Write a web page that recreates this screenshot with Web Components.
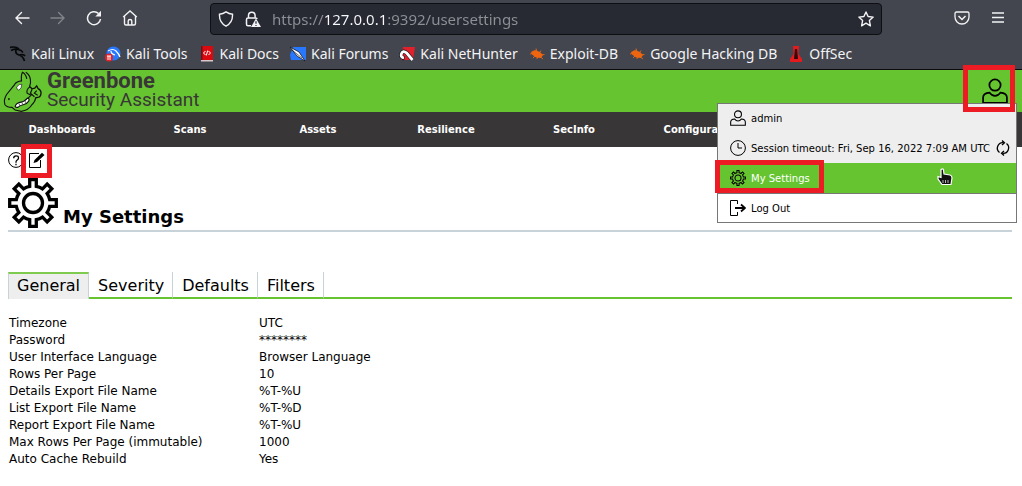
<!DOCTYPE html>
<html lang="en">
<head>
<meta charset="utf-8">
<meta name="viewport" content="width=device-width, initial-scale=1">
<title>Greenbone Security Assistant</title>
<style>
  body {
    margin: 0;
    background: #fff;
    color: #000;
    font-family: "DejaVu Sans", sans-serif;
    font-size: 12px;
    --green: #66c430;
    --dark: #393637;
    --marker: #ed1c24;
  }
</style>
</head>
<body>
  <browser-bar url="https://127.0.0.1:9392/usersettings">
    <book-mark icon="kali">Kali Linux</book-mark>
    <book-mark icon="tools">Kali Tools</book-mark>
    <book-mark icon="docs">Kali Docs</book-mark>
    <book-mark icon="forums">Kali Forums</book-mark>
    <book-mark icon="nethunter">Kali NetHunter</book-mark>
    <book-mark icon="bug">Exploit-DB</book-mark>
    <book-mark icon="bug">Google Hacking DB</book-mark>
    <book-mark icon="offsec">OffSec</book-mark>
  </browser-bar>

  <gsa-header>
    <user-menu>
      <menu-entry icon="user">admin</menu-entry>
      <menu-entry icon="clock" action="refresh">Session timeout: Fri, Sep 16, 2022 7:09 AM UTC</menu-entry>
      <menu-entry icon="gear" active>My Settings</menu-entry>
      <menu-entry icon="logout" plain>Log Out</menu-entry>
    </user-menu>
  </gsa-header>

  <main-nav items="Dashboards,Scans,Assets,Resilience,SecInfo,Configuration"></main-nav>

  <settings-page>
    <tab-bar tabs="General,Severity,Defaults,Filters"></tab-bar>
    <settings-table></settings-table>
  </settings-page>

<script>
// eight teeth around the centre of a 50x50 box
function gearPath() {
  const parts = [];
  for (let i = 0; i < 8; i++) {
    const a = i * Math.PI / 4;
    const at = (x, y) => `${25 + x * Math.cos(a) - y * Math.sin(a)} ${25 + x * Math.sin(a) + y * Math.cos(a)}`;
    parts.push(`${i ? 'A17 17 0 0 1' : 'M'} ${at(-3.3, -16.7)} L ${at(-3.3, -23.3)} L ${at(3.3, -23.3)} L ${at(3.3, -16.7)}`);
  }
  return parts.join(' ') + ` A17 17 0 0 1 21.700 8.300z`;
}

// name: [viewBox, markup]
const ICONS = {
  back: ['0 0 16 16', '<path d="M15 8H2M7.500 2.500L2 8l5.500 5.500" fill="none" stroke="currentColor" stroke-width="1.400" stroke-linecap="round"/>'],
  forward: ['0 0 16 16', '<path d="M1 8h13M8.500 2.500L14 8l-5.500 5.500" fill="none" stroke="currentColor" stroke-width="1.400" stroke-linecap="round"/>'],
  reload: ['0 0 16 16', '<path d="M12.500 3.500A6.500 6.500 0 1 0 14.500 9" fill="none" stroke="currentColor" stroke-width="1.500"/><path d="M15 .8v5.700H9.300z" fill="currentColor"/>'],
  home: ['0 0 16 16', '<path d="M1.200 7L8 1l6.800 6M2.500 6v7.500q0 1.500 1.500 1.500h8q1.500 0 1.500-1.500V6M6.200 15v-4q0-1.500 1.800-1.500T9.800 11v4" fill="none" stroke="currentColor" stroke-width="1.400"/>'],
  shield: ['0 0 16 16', '<path d="M8 .8q3 2 6.500 2.400Q15 11.500 8 15.200Q1 11.500 1.500 3.200Q5 2.800 8 .8z" fill="none" stroke="currentColor" stroke-width="1.400"/>'],
  lock: ['0 0 16 16', '<path d="M3.500 7V4.500a3.300 3.300 0 0 1 6.600 0V7M6 14.800H3q-1.500 0-1.500-1.500V8.500Q1.500 7 3 7h7.500q1.500 0 1.500 1" fill="none" stroke="currentColor" stroke-width="1.500"/><path d="M11 7.500L16 16H6z" fill="currentColor"/><path d="M11 10.200v2.600M11 14v1" stroke="#282a33" stroke-width="1.200"/>'],
  star: ['0 0 16 16', '<path d="M8 1l2.100 4.500 5.100.6-3.800 3.500 1 5.200L8 12.200l-4.400 2.600 1-5.200L.8 6.100l5.100-.6z" fill="none" stroke="currentColor" stroke-width="1.400" stroke-linejoin="round"/>'],
  pocket: ['0 0 16 16', '<path d="M2.500 2h11q1.500 0 1.500 1.500V7A7 7 0 0 1 1 7V3.500Q1 2 2.500 2z" fill="none" stroke="currentColor" stroke-width="1.300"/><path d="M4.500 6L8 9.500 11.500 6" fill="none" stroke="currentColor" stroke-width="1.500"/>'],
  burger: ['0 0 16 16', '<path d="M2 3h12M2 7.500h12M2 12h12" stroke="currentColor" stroke-width="1.300"/>'],
  kali: ['0 0 16 16', '<path d="M0 1.500q6-1.500 9 1.500M1 4.500q4-2 7-1l3 1 2 2M6 4q-1 4 3 5t5.500 6M9 9q5-1 6 1" fill="none" stroke="#08090b" stroke-width="1.700"/>'],
  tools: ['0 0 16 16', '<circle cx="8.500" cy="7.500" r="7" fill="#2777ff"/><path d="M3 5q5-3 8 0t4 6M6 5q0 3 4 4" fill="none" stroke="#fff" stroke-width="1.200"/><circle cx="4" cy="11.500" r="4" fill="#e0242b"/><path d="M2 10h4M3 10v4M5 10v4" stroke="#fff"/>'],
  docs: ['0 0 16 16', '<path d="M2 0h12v15H2z" fill="#d9090f"/><path d="M2 0h1.500v15H2z" fill="#6d1117"/><path d="M2 14h12v1.500H2z" fill="#d8c8c8"/><path d="M6.500 5L4.500 7l2 2M9.500 5l2 2-2 2M8.700 4.500l-1.400 5" fill="none" stroke="#fff"/>'],
  forums: ['0 0 16 16', '<path d="M3 1h13v13H1L0 9z" fill="#2777ff"/><path d="M0 1l9 5 6 9-8-5z" fill="#fff" stroke="#15171d" stroke-width=".8"/><path d="M2 4l10 8" stroke="#15171d" stroke-width=".6"/>'],
  nethunter: ['0 0 16 16', '<path d="M4 1h12l-2 13H2z" fill="#e0202a"/><path d="M13.500 14L7.500 6.800Q4 4 2.500 7.500T5.500 12.500" fill="none" stroke="#15171d" stroke-width="4"/><path d="M13.500 14L7.500 6.800Q4 4 2.500 7.500T5 12" fill="none" stroke="#fff" stroke-width="2.800"/>'],
  bug: ['0 0 16 16', '<path d="M2 6l4-2 5 2 3 3-2 3-5-.5-4-3z" fill="#ee6511"/><path d="M1 8l5-1M4 12l3-3M8 13l1-4M7 2.500L8 6M12 4.500l-2 3M15.500 8.500L11 9M14 13l-4-3" stroke="#ee6511" stroke-width=".9"/>'],
  offsec: ['0 0 16 16', '<path d="M5 0h6l-.5 8 3.500 5v3H2v-3l3.500-5z" fill="#e11b1e"/><path d="M7 3h2l1 10H6z" fill="#33070b"/>'],
  user: ['0 0 24 24', '<circle cx="12" cy="6.500" r="5.200" fill="none" stroke="currentColor" stroke-width="1.600"/><path d="M1 23v-5q0-4 6-4.500 2 3 5 3t5-3q6 .5 6 4.500v5z" fill="none" stroke="currentColor" stroke-width="1.600"/>'],
  clock: ['0 0 16 16', '<circle cx="8" cy="8" r="7.400" fill="none" stroke="currentColor"/><path d="M8 3v5h4" fill="none" stroke="currentColor"/>'],
  refresh: ['0 0 16 16', '<path d="M4.500 12.500A5.500 5.500 0 0 1 8.500 2.700M7.500 13.300A5.500 5.500 0 0 0 11.500 3.500" fill="none" stroke="currentColor" stroke-width="1.300"/><path d="M7 .5l2.500 2.200L7 5M9 11l-2.500 2.300L9 15.500" fill="none" stroke="currentColor" stroke-width="1.300"/>'],
  gear: ['0 0 50 50', `<path d="${gearPath()}" fill="none" stroke="currentColor" stroke-width="3.300"/><circle cx="25" cy="25" r="9.500" fill="none" stroke="currentColor" stroke-width="3.300"/>`],
  logout: ['0 0 16 16', '<path d="M7.500 4V.500h-7v15h7V12" fill="none" stroke="currentColor"/><path d="M5 8h10M11 4.500L15 8l-4 3.500" fill="none" stroke="currentColor" stroke-width="1.800"/>'],
  help: ['0 0 16 16', '<circle cx="8" cy="8" r="7.400" fill="none" stroke="currentColor"/><path d="M5.700 6.300q0-2.500 2.400-2.500t2.400 2.200q0 1.200-1.300 2T8 10v.7M8 11.800v1.500" fill="none" stroke="currentColor" stroke-width="1.300"/>'],
  edit: ['0 0 16 16', '<path d="M10 1.500H.500v14h11V8" fill="none" stroke="currentColor"/><path d="M4.500 11l1-3L13 .8 15.500 3 8 10z" fill="currentColor"/>'],
  cursor: ['0 0 16 18', '<path d="M4 1.500q2-1.500 2.500.5l.5 4 6 1q2 .5 2 3l-1 6.500H5L1 11V8.500l3 1z" fill="#111" stroke="#fff" stroke-width="1.200"/><path d="M6 12v3M8.500 12v3M11 12v3" stroke="#fff" stroke-width=".7"/>'],
  dragon: ['0 0 130 126', `<path d="M65 32Q63 14 68 5q10 5 13 20M78 5q12 8 14 22 2 12-3 22" fill="none" stroke="#111" stroke-width="3.500"/>
    <path d="M66 31Q50 32 44 42L20 72Q10 88 15 103q6 8 21 8l10 8 18 4q22-2 34-22" fill="none" stroke="#111" stroke-width="3.500"/>
    <path d="M89 48q5 2 7 7l9-2 6-7 4 8q9 4 9 12 0 12-7 14l-9 2q-1 10-10 20" fill="none" stroke="#111" stroke-width="4"/>
    <path d="M90 49q-11 8-8 19l12 6-9 9M97 56l-5 12 12 11M111 60l-7 8 10 6" fill="none" stroke="#111" stroke-width="3.500"/>
    <path d="M50 50q8-11 16-9 0 13-9 18-6-1-7-9z" fill="#fff" stroke="#111" stroke-width="2"/>
    <path d="M46 108q2-9 14-12 14-2 23-13 7 1 4 9-5 9-17 11-9 1-16 8-6 1-8-3z" fill="#fff" stroke="#111" stroke-width="3.500"/>
    <path d="M57 99l3 7M66 96l3 7M75 91l4 7" stroke="#111" stroke-width="2"/>
    <ellipse cx="27" cy="86" rx="2.500" ry="3.500" fill="#111"/>`]
};

// inline svg by name, sized through --size
class SvgIcon extends HTMLElement {
  constructor() {
    super();
    this.attachShadow({mode: 'open'});
  }

  connectedCallback() {
    const [box, markup] = ICONS[this.getAttribute('name')];
    this.shadowRoot.innerHTML = /* html */ `
    <style>
      :host { display: block; flex: none; width: var(--size, 16px); height: var(--size, 16px); }
      svg { display: block; width: 100%; height: 100%; }
    </style>
    <svg viewBox="${box}" aria-hidden="true">${markup}</svg>
    `;
  }
}
customElements.define('svg-icon', SvgIcon);

class BrowserBar extends HTMLElement {
  constructor() {
    super();
    this.attachShadow({mode: 'open'});
  }

  connectedCallback() {
    this.shadowRoot.innerHTML = /* html */ `
    <style>
      :host {
        display: block;
        background: #43464e;
        color: #f3f3f5;
        border-bottom: 1px solid #0c0c0d;
        font-family: "Noto Sans", sans-serif;
      }
      .tools { display: flex; align-items: center; height: 36px; padding: 0 16px 0 14px; }
      .buttons { display: flex; gap: 20px; width: 196px; }
      button { border: 0; padding: 0; background: none; color: inherit; }
      button:disabled { color: #82848a; }
      .address {
        flex: 1;
        display: flex;
        align-items: center;
        gap: 11px;
        box-sizing: border-box;
        height: 32px;
        margin-top: 1px;
        padding: 0 7px;
        border: 1px solid #0e0f13;
        border-radius: 4px;
        background: #282a33;
      }
      input {
        flex: 1;
        min-width: 0;
        border: 0;
        padding: 0;
        outline: 0;
        color: #8e9096;
        font: 15px/24px "Noto Sans", sans-serif;
        /* the host part is brighter than the rest of the address */
        background: linear-gradient(90deg, #8e9096 52px, #fbfbfe 52px 115px, #8e9096 115px);
        -webkit-background-clip: text;
        background-clip: text;
        -webkit-text-fill-color: transparent;
      }
      .right { display: flex; justify-content: flex-end; gap: 20px; width: 124px; }
      .bookmarks { display: flex; gap: 11px; height: 33px; align-items: center; padding: 0 10px; }
    </style>
    <div class="tools">
      <div class="buttons">
        <button aria-label="Back"><svg-icon name="back"></svg-icon></button>
        <button aria-label="Forward" disabled><svg-icon name="forward"></svg-icon></button>
        <button aria-label="Reload"><svg-icon name="reload"></svg-icon></button>
        <button aria-label="Home"><svg-icon name="home"></svg-icon></button>
      </div>
      <div class="address">
        <svg-icon name="shield"></svg-icon>
        <svg-icon name="lock"></svg-icon>
        <input type="text" aria-label="Address" value="${this.getAttribute('url')}">
        <button aria-label="Bookmark this page"><svg-icon name="star"></svg-icon></button>
      </div>
      <div class="right">
        <button aria-label="Pocket"><svg-icon name="pocket"></svg-icon></button>
        <button aria-label="Menu"><svg-icon name="burger"></svg-icon></button>
      </div>
    </div>
    <div class="bookmarks"><slot></slot></div>
    `;
  }
}
customElements.define('browser-bar', BrowserBar);

class BookMark extends HTMLElement {
  constructor() {
    super();
    this.attachShadow({mode: 'open'});
  }

  connectedCallback() {
    this.shadowRoot.innerHTML = /* html */ `
    <style>
      :host { display: block; white-space: nowrap; }
      a { display: flex; align-items: center; gap: 5px; padding-top: 2px; color: inherit; font-size: 14px; line-height: 20px; text-decoration: none; }
    </style>
    <a href="#"><svg-icon name="${this.getAttribute('icon')}"></svg-icon><slot></slot></a>
    `;
  }
}
customElements.define('book-mark', BookMark);

class GsaHeader extends HTMLElement {
  constructor() {
    super();
    this.attachShadow({mode: 'open'});
    this.shadowRoot.innerHTML = /* html */ `
    <style>
      :host { display: flex; justify-content: space-between; height: 42px; position: relative; background: var(--green); }
      .brand { display: flex; gap: 4px; color: var(--dark); text-decoration: none; }
      .brand svg-icon { --size: 43px; }
      .name { font: 19px/19px Roboto, sans-serif; white-space: nowrap; padding-top: 1px; }
      .name b { display: block; font-size: 22px; }
    </style>
    <a class="brand" href="#">
      <svg-icon name="dragon"></svg-icon>
      <span class="name"><b>Greenbone</b>Security Assistant</span>
    </a>
    <slot></slot>
    `;
  }
}
customElements.define('gsa-header', GsaHeader);

class UserMenu extends HTMLElement {
  constructor() {
    super();
    this.attachShadow({mode: 'open'});
    this.shadowRoot.innerHTML = /* html */ `
    <style>
      :host { display: block; padding: 8px 14px 0 0; }
      button { display: block; border: 0; padding: 0; background: none; color: #000; }
      button svg-icon { --size: 26px; }
      .menu {
        position: absolute;
        top: 33px;
        right: 5px;
        z-index: 2;
        box-sizing: border-box;
        width: 300px;
        border: 1px solid #777;
        background: #eee;
      }
      .marker {
        position: absolute;
        top: -5px;
        right: 7px;
        z-index: 3;
        box-sizing: border-box;
        width: 52px;
        height: 47px;
        border: 5px solid var(--marker);
      }
    </style>
    <button aria-label="User menu"><svg-icon name="user"></svg-icon></button>
    <div class="menu"><slot></slot></div>
    <div class="marker"></div>
    `;
  }
}
customElements.define('user-menu', UserMenu);

class MenuEntry extends HTMLElement {
  constructor() {
    super();
    this.attachShadow({mode: 'open'});
  }

  connectedCallback() {
    const action = this.getAttribute('action');
    const active = this.hasAttribute('active');

    this.shadowRoot.innerHTML = /* html */ `
    <style>
      :host { display: block; position: relative; }
      :host(:first-child) { margin-top: -1px; }
      :host([active]) { background: var(--green); }
      :host([plain]) { background: #fff; border-top: 1px solid #777; }
      a { display: flex; align-items: center; gap: 5px; height: 30px; padding: 0 5px 0 12px; color: #000; font-size: 10px; white-space: nowrap; text-decoration: none; }
      :host([plain]) a { height: 28px; }
      :host([active]) span { color: #fff; }
      span { flex: 1; }
      .marker {
        position: absolute;
        top: -3px;
        left: -3px;
        box-sizing: border-box;
        width: 109px;
        height: 33px;
        border: 5px solid var(--marker);
      }
      .cursor { position: absolute; top: 5px; right: 62px; --size: 18px; }
    </style>
    <a href="#">
      <svg-icon name="${this.getAttribute('icon')}"></svg-icon>
      <span><slot></slot></span>
      ${action ? `<svg-icon name="${action}"></svg-icon>` : ''}
    </a>
    ${active ? '<div class="marker"></div><svg-icon class="cursor" name="cursor"></svg-icon>' : ''}
    `;
  }
}
customElements.define('menu-entry', MenuEntry);

class MainNav extends HTMLElement {
  constructor() {
    super();
    this.attachShadow({mode: 'open'});
  }

  connectedCallback() {
    const items = this.getAttribute('items').split(',');
    this.shadowRoot.innerHTML = /* html */ `
    <style>
      :host { display: block; background: var(--dark); overflow: hidden; }
      nav { display: grid; grid-template-columns: repeat(8, 128px); justify-content: center; padding-right: 2px; }
      a { color: #fff; font-size: 10px; font-weight: bold; line-height: 35px; text-align: center; text-decoration: none; }
    </style>
    <nav>${items.map(item => `<a href="#">${item}</a>`).join('')}</nav>
    `;
  }
}
customElements.define('main-nav', MainNav);

class SettingsPage extends HTMLElement {
  constructor() {
    super();
    this.attachShadow({mode: 'open'});
    this.shadowRoot.innerHTML = /* html */ `
    <style>
      :host { display: block; padding: 5px 10px 0 8px; }
      .icons { display: flex; gap: 5px; height: 26px; }
      button { display: block; align-self: flex-start; position: relative; border: 0; padding: 0; background: none; color: #000; }
      .marker {
        position: absolute;
        top: -8px;
        left: -8px;
        box-sizing: border-box;
        width: 31px;
        height: 34px;
        border: 5px solid var(--marker);
      }
      header { display: flex; align-items: flex-end; gap: 5px; padding-bottom: 2px; border-bottom: 2px solid #c8d3d9; margin-bottom: 40px; }
      header svg-icon { --size: 50px; }
      h1 { margin: 0; font-size: 18px; line-height: 22px; }
    </style>
    <div class="icons">
      <button aria-label="Help"><svg-icon name="help"></svg-icon></button>
      <button aria-label="Edit My Settings"><svg-icon name="edit"></svg-icon><span class="marker"></span></button>
    </div>
    <header><svg-icon name="gear"></svg-icon><h1>My Settings</h1></header>
    <slot></slot>
    `;
  }
}
customElements.define('settings-page', SettingsPage);

class TabBar extends HTMLElement {
  constructor() {
    super();
    this.attachShadow({mode: 'open'});
  }

  connectedCallback() {
    const tabs = this.getAttribute('tabs').split(',');
    this.shadowRoot.innerHTML = /* html */ `
    <style>
      :host { display: flex; }
      button {
        box-sizing: border-box;
        height: 27px;
        padding: 2px 8px 0 9px;
        border: 0;
        border-right: 1px solid #c8d3d9;
        border-bottom: 2px solid var(--green);
        background: #fff;
        color: #000;
        font: 16px/23px "DejaVu Sans", sans-serif;
      }
      button[aria-selected="true"] {
        padding: 0 8px 2px;
        border-top: 2px solid #7fcb50;
        border-left: 1px solid #c8d3d9;
        border-bottom: 0;
        background: #eee;
      }
      .rest { flex: 1; border-bottom: 2px solid var(--green); }
    </style>
    ${tabs.map((tab, i) => `<button role="tab" aria-selected="${i === 0}">${tab}</button>`).join('')}
    <div class="rest"></div>
    `;
  }
}
customElements.define('tab-bar', TabBar);

class SettingsTable extends HTMLElement {
  constructor() {
    super();

    this._rows = [
      ['Timezone', 'UTC'],
      ['Password', '********'],
      ['User Interface Language', 'Browser Language'],
      ['Rows Per Page', '10'],
      ['Details Export File Name', '%T-%U'],
      ['List Export File Name', '%T-%D'],
      ['Report Export File Name', '%T-%U'],
      ['Max Rows Per Page (immutable)', '1000'],
      ['Auto Cache Rebuild', 'Yes']
    ];
    this.attachShadow({mode: 'open'});
  }

  connectedCallback() {
    this.shadowRoot.innerHTML = /* html */ `
    <style>
      :host { display: block; padding-top: 16px; }
      table { width: 100%; border-collapse: collapse; table-layout: fixed; font-size: 12px; line-height: 17px; }
      th, td { padding: 0 1px; text-align: left; font-weight: normal; }
      th { width: 248px; }
    </style>
    <table>
      ${this._rows.map(([name, value]) => `<tr><th scope="row">${name}</th><td>${value}</td></tr>`).join('')}
    </table>
    `;
  }
}
customElements.define('settings-table', SettingsTable);
</script>
</body>
</html>
